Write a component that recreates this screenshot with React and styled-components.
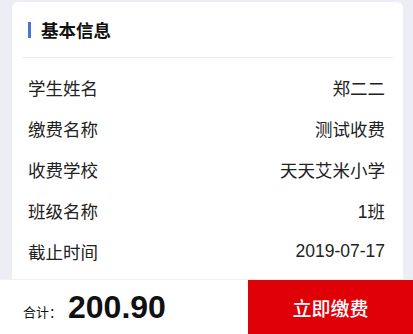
import React from "react";
import styled, { createGlobalStyle } from "styled-components";

const GlobalStyle = createGlobalStyle`
	html, body {
		margin: 0;
		padding: 0;
		background: #ededf5;
		font-family: "Noto Sans CJK SC", "Noto Sans", sans-serif;
	}
`;

const rows = [
	{ id: 1, label: "学生姓名", value: "郑二二" },
	{ id: 2, label: "缴费名称", value: "测试收费" },
	{ id: 3, label: "收费学校", value: "天天艾米小学" },
	{ id: 4, label: "班级名称", value: "1班" },
	{ id: 5, label: "截止时间", value: "2019-07-17" },
];

const App = () => {
	return (
		<Page>
			<GlobalStyle />
			<Card>
				<CardHeader>
					<Title>基本信息</Title>
				</CardHeader>
				<List>
					{rows.map(({ id, label, value }) => (
						<Row key={id}>
							<span>{label}</span>
							<span>{value}</span>
						</Row>
					))}
				</List>
			</Card>
			<Footer>
				<Total>
					<small>合计：</small>
					<strong>200.90</strong>
				</Total>
				<PayButton type="button">立即缴费</PayButton>
			</Footer>
		</Page>
	);
};

const Page = styled.div`
	height: 334px;
	padding: 2px 10px 0 12px;
	box-sizing: border-box;
	overflow: hidden;
	position: relative;
`;

const Card = styled.section`
	background: #fff;
	border-radius: 6px;
	padding: 0 10px;
	height: 320px;
`;

const CardHeader = styled.div`
	height: 55px;
	border-bottom: 1px solid #ececf0;
	display: flex;
	align-items: center;
	padding-left: 6px;
`;

const Title = styled.h3`
	margin: 0;
	font-size: 17.5px;
	font-weight: 700;
	color: #111;
	display: flex;
	align-items: center;
	gap: 10px;

	&::before {
		content: "";
		width: 3px;
		height: 16px;
		background: #4a75c8;
	}
`;

const List = styled.div`
	padding: 9px 8px 0 6px;
`;

const Row = styled.div`
	height: 41px;
	display: flex;
	justify-content: space-between;
	align-items: center;
	font-family: "Liberation Sans", "Noto Sans CJK SC", sans-serif;
	font-size: 17.5px;
	color: #222;
`;

const Footer = styled.footer`
	position: absolute;
	left: 0;
	right: 0;
	bottom: 0;
	height: 54px;
	background: #fff;
	border-top: 1px solid #f2f2f6;
	display: flex;
	align-items: stretch;
`;

const Total = styled.div`
	flex: 1;
	display: flex;
	align-items: center;
	padding-left: 23px;
	gap: 6px;
	color: #111;

	small {
		font-size: 13px;
		padding-top: 8px;
	}

	strong {
		font-family: "Liberation Sans", Arial, sans-serif;
		font-size: 32px;
		font-weight: 700;
	}
`;

const PayButton = styled.button`
	width: 165px;
	border: none;
	background: #e00008;
	color: #fff;
	font-family: "Noto Sans CJK SC", sans-serif;
	font-size: 19px;
	font-weight: 500;
	cursor: pointer;
`;

export default App;
